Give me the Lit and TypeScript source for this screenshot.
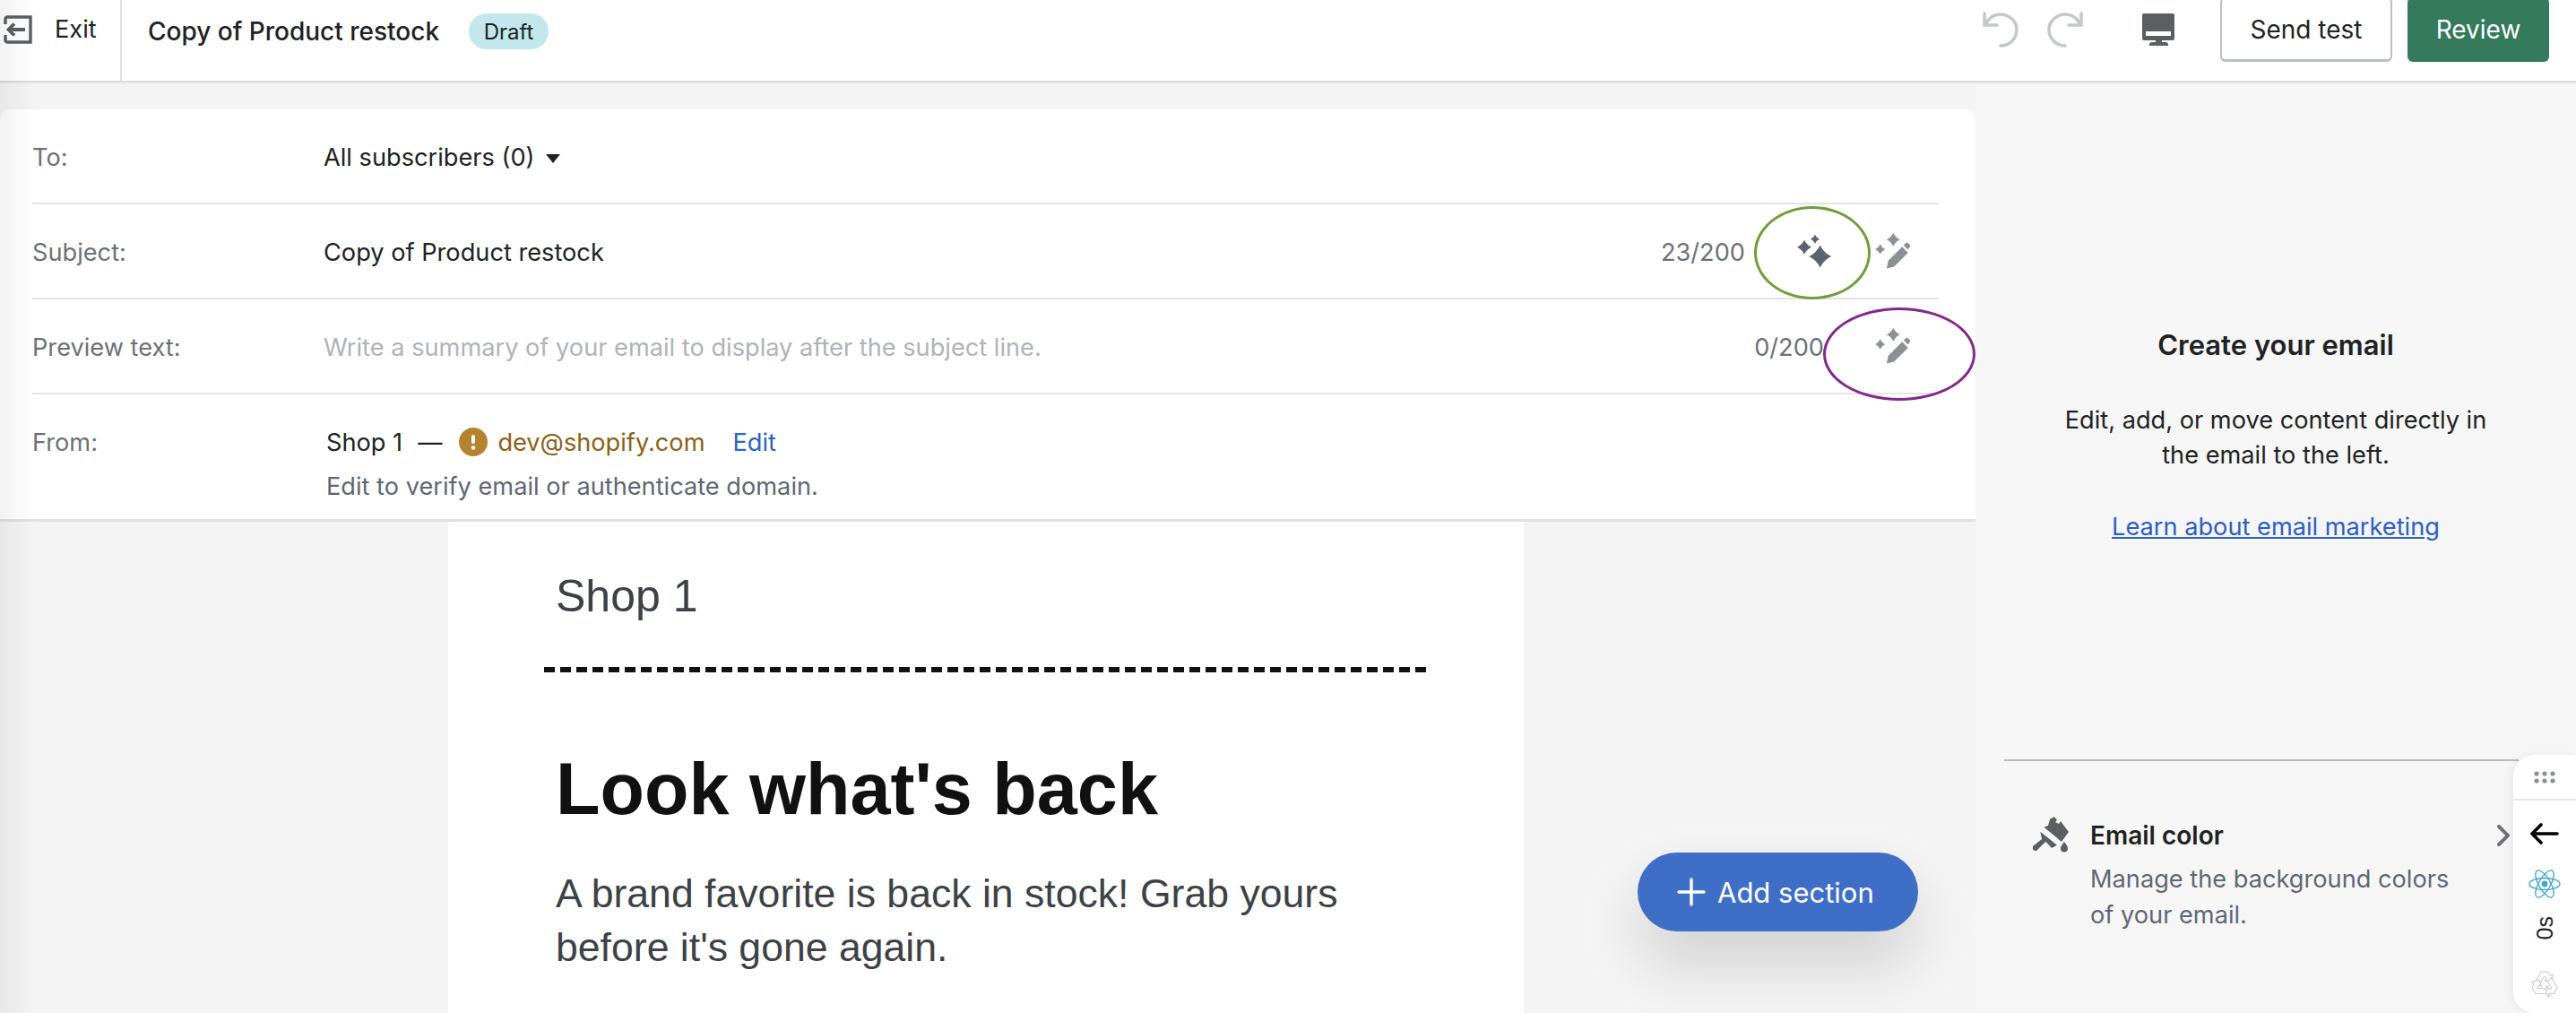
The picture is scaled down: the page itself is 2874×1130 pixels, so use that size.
import {LitElement, html, css, svg} from 'lit';
import {customElement} from 'lit/decorators.js';

// four point star, used by the sparkle and wand icons
const star = (cx: number, cy: number, r: number) => {
  const k = r * 0.32;
  return svg`<path d="M${cx} ${cy - r}Q${cx + k} ${cy - k} ${cx + r} ${cy}Q${cx + k} ${cy + k} ${cx} ${cy + r}Q${cx - k} ${cy + k} ${cx - r} ${cy}Q${cx - k} ${cy - k} ${cx} ${cy - r}Z"></path>`;
};

const sparkleIcon = html`<svg class="ico" viewBox="0 0 40 40" fill="#5c6470">
  ${star(26.7, 26, 12.5)} ${star(9, 15.7, 8)} ${star(21, 6.7, 5)}
</svg>`;

const wandIcon = html`<svg class="ico" viewBox="0 0 40 40" fill="#8c9196">
  ${star(20.3, 7.3, 7.5)} ${star(5.7, 18, 5.5)}
  <path d="M13 39.5l1.6-8.6 15.6-15.6 6.6 6.6-15.6 15.6z"></path>
  <path d="M31.8 13.6l2-2a2.4 2.4 0 0 1 3.4 0l1.2 1.2a2.4 2.4 0 0 1 0 3.4l-2 2z"></path>
</svg>`;

@customElement('app-root')
export class AppRoot extends LitElement {
  static styles = css`
    :host {
      display: block;
      position: relative;
      width: 2874px;
      height: 1130px;
      overflow: hidden;
      background: #f4f4f4;
      font-family: Inter, 'Noto Sans', sans-serif;
      font-size: 27.2px;
      color: #202223;
    }

    /* soft shadow along the left edge of the window */
    .edge {
      position: absolute;
      left: 0;
      top: 0;
      bottom: 0;
      width: 40px;
      background: linear-gradient(90deg, rgba(0, 0, 0, 0.05), rgba(0, 0, 0, 0));
      z-index: 5;
      pointer-events: none;
    }

    .ico {
      display: block;
      width: 40px;
      height: 40px;
    }

    /* top bar */
    .topbar {
      display: flex;
      height: 90px;
      background: #fff;
      border-bottom: 2px solid #dcdcdc;
      box-shadow: 0 1px 3px rgba(0, 0, 0, 0.06);
      position: relative;
      z-index: 2;
    }
    .exit {
      display: flex;
      align-items: center;
      width: 136px;
      padding: 0 0 24px 4px;
      box-sizing: border-box;
      gap: 25px;
      border-right: 2px solid #e1e1e1;
    }
    .exit span {
      margin-top: -2px;
    }
    .exit svg {
      width: 32px;
      height: 32px;
    }
    .title {
      display: flex;
      align-items: center;
      padding: 0 0 20px 29px;
      font-weight: 500;
      font-size: 28px;
    }
    .badge {
      margin-left: 33px;
      background: #c1e7ed;
      border-radius: 20px;
      height: 40px;
      width: 89px;
      display: flex;
      align-items: center;
      justify-content: center;
      font-size: 24px;
      font-weight: 400;
    }
    .actions {
      margin-left: auto;
      display: flex;
      align-items: center;
      height: 66px;
      padding-right: 30px;
    }
    .hist {
      display: block;
      width: 40px;
      height: 40px;
    }
    .hist + .hist {
      margin-left: 32px;
    }
    .monitor {
      display: block;
      width: 36px;
      height: 36px;
      margin: 0 51px 0 66px;
    }
    .btn {
      box-sizing: border-box;
      height: 72px;
      border-radius: 6px;
      display: flex;
      align-items: center;
      justify-content: center;
      font-size: 28px;
    }
    .btn.plain {
      width: 192px;
      background: #fff;
      border: 2px solid #babfc3;
      border-bottom-width: 3px;
      margin-right: 17px;
    }
    .btn.primary {
      width: 158px;
      background: #357a5c;
      color: #fff;
    }

    /* main columns */
    .main {
      display: grid;
      grid-template-columns: 2204px 1fr;
      height: 1038px;
    }
    .left {
      position: relative;
      padding-top: 30px;
    }

    .card {
      background: #fff;
      border-radius: 12px 12px 0 0;
      border-bottom: 3px solid #e1e1e1;
    }
    .row {
      box-sizing: border-box;
      display: flex;
      align-items: center;
      height: 106px;
      padding-top: 2px;
      margin: 0 41px 0 36px;
      border-bottom: 2px solid #e4e4e4;
    }
    .row.last {
      height: 139px;
      padding-top: 0;
      align-items: flex-start;
      border-bottom: none;
    }
    .label {
      width: 325px;
      color: #6d7175;
      flex: none;
    }
    .row.last .label {
      margin-top: 37px;
    }
    .value {
      flex: 1;
    }
    .placeholder {
      color: #b0b3b7;
    }
    .caret {
      display: inline-block;
      width: 0;
      height: 0;
      margin-left: 12px;
      vertical-align: 3px;
      border-left: 8px solid transparent;
      border-right: 8px solid transparent;
      border-top: 10px solid #202223;
    }
    .count {
      color: #6d7175;
      margin-right: 49px;
    }
    .icon-btn {
      width: 56px;
      display: flex;
      justify-content: center;
      flex: none;
      margin-top: -2px;
    }
    .icon-btn + .icon-btn {
      margin-left: 32px;
    }
    .icon-btn:last-child {
      margin-right: 23px;
    }
    .sender {
      margin: 37px 0 0 3px;
    }
    .sender-line {
      display: flex;
      align-items: center;
      height: 32px;
    }
    .dash {
      margin: 0 17px;
    }
    .warn {
      width: 32px;
      height: 32px;
      margin: 0 11px 0 2px;
    }
    .email-addr {
      color: #8a6116;
    }
    .edit {
      color: #2c63c5;
      margin-left: 31px;
    }
    .hint {
      color: #5f6773;
      margin-top: 17px;
    }

    /* email preview */
    .email {
      margin-left: 500px;
      width: 1200px;
      height: 549px;
      background: #fff;
      font-family: 'Liberation Sans', Arial, sans-serif;
      color: #3d4246;
      overflow: hidden;
    }
    .shop {
      font-size: 50px;
      line-height: 56px;
      margin: 55px 0 0 120px;
    }
    .rule {
      margin: 51px 0 0 107px;
      width: 988px;
      height: 6px;
      background: repeating-linear-gradient(90deg, #111 0 12px, transparent 12px 18px);
    }
    .email h1 {
      margin: 84px 0 0 120px;
      font-size: 81px;
      line-height: 92px;
      font-weight: 700;
      color: #111;
    }
    .email p {
      margin: 41px 0 0 120px;
      width: 960px;
      font-size: 44.6px;
      line-height: 60px;
    }

    .add {
      position: absolute;
      right: 64px;
      bottom: 92px;
      width: 313px;
      height: 88px;
      border-radius: 44px;
      background: #3f6ec6;
      color: #fff;
      display: flex;
      align-items: center;
      gap: 13px;
      box-sizing: border-box;
      padding-left: 44px;
      font-size: 31px;
      box-shadow: 0 36px 70px rgba(0, 0, 0, 0.15);
    }
    .add svg {
      width: 32px;
      height: 32px;
      display: block;
    }

    /* annotation rings drawn over the form */
    .ring {
      position: absolute;
      box-sizing: border-box;
      border-radius: 50%;
      z-index: 3;
      pointer-events: none;
    }
    .ring.green {
      left: 1957px;
      top: 138px;
      width: 130px;
      height: 104px;
      border: 3px solid #6f9f3c;
    }
    .ring.purple {
      left: 2034px;
      top: 251px;
      width: 170px;
      height: 104px;
      border: 3px solid #83288c;
    }

    /* right panel */
    .panel {
      display: flex;
      flex-direction: column;
      padding: 0 0 0 32px;
      background: #f6f6f6;
    }
    .intro {
      margin-left: -32px;
      padding-top: 274px;
      text-align: center;
      height: 477px;
      box-sizing: border-box;
    }
    .intro h2 {
      margin: 0;
      font-size: 31px;
      font-weight: 600;
      line-height: 38px;
    }
    .intro p {
      margin: 45px 0 0;
      line-height: 39px;
    }
    .intro a {
      display: block;
      margin-top: 42px;
      line-height: 38px;
      color: #2c5ec4;
      text-decoration: underline;
    }
    .settings {
      border-top: 2px solid #b9bdc1;
      margin-right: 64px;
      margin-top: 278px;
      display: flex;
      padding: 65px 0 0 32px;
      position: relative;
    }
    .brush {
      width: 40px;
      height: 40px;
      margin-right: 24px;
      flex: none;
      margin-top: -3px;
    }
    .settings h3 {
      margin: 0;
      font-size: 28px;
      line-height: 36px;
      font-weight: 600;
    }
    .settings .desc {
      margin-top: 11px;
      line-height: 40px;
      color: #5f6773;
      width: 420px;
    }
    .chev {
      position: absolute;
      right: 10px;
      top: 71px;
      width: 14px;
      height: 24px;
    }

    /* dev toolbar stuck to the right edge */
    .dock {
      position: absolute;
      right: 0;
      top: 842px;
      width: 70px;
      height: 288px;
      background: #fff;
      border-radius: 24px 0 0 24px;
      box-shadow: -4px 0 8px rgba(0, 0, 0, 0.05);
      z-index: 4;
      display: flex;
      flex-direction: column;
      align-items: center;
    }
    .grip {
      align-self: stretch;
      height: 49px;
      border-bottom: 2px solid #e4e5e9;
      display: flex;
      justify-content: center;
      align-items: center;
    }
    .grip svg {
      width: 24px;
      height: 14px;
    }
    .dock .arrow {
      width: 32px;
      height: 24px;
      margin-top: 25px;
    }
    .dock .react {
      width: 36px;
      height: 32px;
      margin-top: 28px;
    }
    .secs {
      font-family: 'Liberation Sans', Arial, sans-serif;
      font-size: 25px;
      line-height: 28px;
      color: #222;
      writing-mode: vertical-rl;
      transform: rotate(180deg);
      margin-top: 20px;
    }
    .dock .recycle {
      width: 32px;
      height: 32px;
      margin-top: 34px;
    }
  `;

  render() {
    return html`
      <div class="topbar">
        <div class="exit">
          <svg viewBox="0 0 32 32" fill="none" stroke="#5c5f62" stroke-width="3.4">
            <path d="M2 10V4a2 2 0 0 1 2-2h26v28H4a2 2 0 0 1-2-2v-6"></path>
            <path d="M24 16H6M12 9.5L5.5 16l6.5 6.5" stroke-width="3.8"></path>
          </svg>
          <span>Exit</span>
        </div>
        <div class="title">
          Copy of Product restock
          <span class="badge">Draft</span>
        </div>
        <div class="actions">
          <svg class="hist" viewBox="0 0 40 40" fill="none" stroke="#c4c8cc" stroke-width="3.6" stroke-linecap="round">
            <path d="M2 2v13h14M3 14C7 7 13 3 19 3c10 0 19 7 19 17s-8 18-18 18"></path>
          </svg>
          <svg class="hist" viewBox="0 0 40 40" fill="none" stroke="#c4c8cc" stroke-width="3.6" stroke-linecap="round">
            <path d="M38 2v13H24M37 14C33 7 27 3 21 3 11 3 2 10 2 20s8 18 18 18"></path>
          </svg>
          <svg class="monitor" viewBox="0 0 36 36">
            <path fill="#5c5f62" d="M2 0h32a2 2 0 0 1 2 2v26a2 2 0 0 1-2 2H22v2h4a3 3 0 0 1 3 4H8a3 3 0 0 1 3-4h4v-2H2a2 2 0 0 1-2-2V2a2 2 0 0 1 2-2z"></path>
            <rect x="4" y="20" width="28" height="5" fill="#fff"></rect>
          </svg>
          <div class="btn plain">Send test</div>
          <div class="btn primary">Review</div>
        </div>
      </div>

      <div class="main">
        <div class="left">
          <div class="card">
            <div class="row">
              <div class="label">To:</div>
              <div class="value">All subscribers (0)<span class="caret"></span></div>
            </div>
            <div class="row">
              <div class="label">Subject:</div>
              <div class="value">Copy of Product restock</div>
              <div class="count">23/200</div>
              <div class="icon-btn">${sparkleIcon}</div>
              <div class="icon-btn">${wandIcon}</div>
            </div>
            <div class="row">
              <div class="label">Preview text:</div>
              <div class="value placeholder">Write a summary of your email to display after the subject line.</div>
              <div class="count">0/200</div>
              <div class="icon-btn">${wandIcon}</div>
            </div>
            <div class="row last">
              <div class="label">From:</div>
              <div class="sender">
                <div class="sender-line">
                  Shop 1<span class="dash">—</span>
                  <svg class="warn" viewBox="0 0 32 32">
                    <circle cx="16" cy="16" r="16" fill="#b5822f"></circle>
                    <rect x="14" y="8" width="4" height="10" rx="2" fill="#fff"></rect>
                    <circle cx="16" cy="22.5" r="2.3" fill="#fff"></circle>
                  </svg>
                  <span class="email-addr">dev@shopify.com</span>
                  <span class="edit">Edit</span>
                </div>
                <div class="hint">Edit to verify email or authenticate domain.</div>
              </div>
            </div>
          </div>

          <div class="email">
            <div class="shop">Shop 1</div>
            <div class="rule"></div>
            <h1>Look what's back</h1>
            <p>A brand favorite is back in stock! Grab yours before it's gone again.</p>
          </div>

          <div class="add">
            <svg viewBox="0 0 32 32" stroke="#fff" stroke-width="3.4" stroke-linecap="round">
              <path d="M16 2v28M2 16h28"></path>
            </svg>
            <span>Add section</span>
          </div>

          <div class="ring green"></div>
          <div class="ring purple"></div>
        </div>

        <div class="panel">
          <div class="intro">
            <h2>Create your email</h2>
            <p>Edit, add, or move content directly in<br />the email to the left.</p>
            <a>Learn about email marketing</a>
          </div>
          <div class="settings">
            <svg class="brush" viewBox="0 0 40 40" fill="#5c5f62">
              <path d="M23.700 0L27 3.500 25 6l4 2 2-3 9 12-8 11L12.500 11.700 17 10l2-7z"></path>
              <path d="M8.300 16.700L27 31.700 21 35l-6.400-7-1.600 1-9 9a3.500 3.500 0 0 1-4-5l10-8z"></path>
              <path d="M35 28c2.500 3.500 4 5 4 7.500a4 4 0 0 1-8 0c0-2.500 1.500-4 4-7.500z"></path>
            </svg>
            <div>
              <h3>Email color</h3>
              <div class="desc">Manage the background colors of your email.</div>
            </div>
            <svg class="chev" viewBox="0 0 14 24" fill="none" stroke="#6d7175" stroke-width="4" stroke-linecap="round">
              <path d="M2 2l10 10L2 22"></path>
            </svg>
          </div>
        </div>
      </div>

      <div class="dock">
        <div class="grip">
          <svg viewBox="0 0 24 14" fill="#8c9196">
            <circle cx="3" cy="3" r="2.6"></circle>
            <circle cx="12" cy="3" r="2.6"></circle>
            <circle cx="21" cy="3" r="2.6"></circle>
            <circle cx="3" cy="11" r="2.6"></circle>
            <circle cx="12" cy="11" r="2.6"></circle>
            <circle cx="21" cy="11" r="2.6"></circle>
          </svg>
        </div>
        <svg class="arrow" viewBox="0 0 32 24" fill="none" stroke="#000" stroke-width="3.6" stroke-linecap="round" stroke-linejoin="round">
          <path d="M30 12H2M12 2L2 12l10 10"></path>
        </svg>
        <svg class="react" viewBox="-18 -16 36 32" fill="none" stroke="#45a4d2" stroke-width="1.4">
          <ellipse rx="17" ry="6.5"></ellipse>
          <ellipse rx="17" ry="6.5" transform="rotate(60)"></ellipse>
          <ellipse rx="17" ry="6.5" transform="rotate(120)"></ellipse>
          <circle r="3.4" fill="#45a4d2" stroke="none"></circle>
        </svg>
        <div class="secs">0s</div>
        <svg class="recycle" viewBox="-16 -16 32 32" fill="#fff" stroke="#c4c6ca" stroke-width="1">
          ${[0, 120, 240].map(
            (a) => svg`<path transform="rotate(${a})" d="M-10 -3L-4 -14H4L6.500 -9.500L9.500 -11L7.500 -3L-0.500 -4L2.500 -5.500L1 -8.500H-0.500L-5 -1z"></path>`
          )}
        </svg>
      </div>

      <div class="edge"></div>
    `;
  }
}
